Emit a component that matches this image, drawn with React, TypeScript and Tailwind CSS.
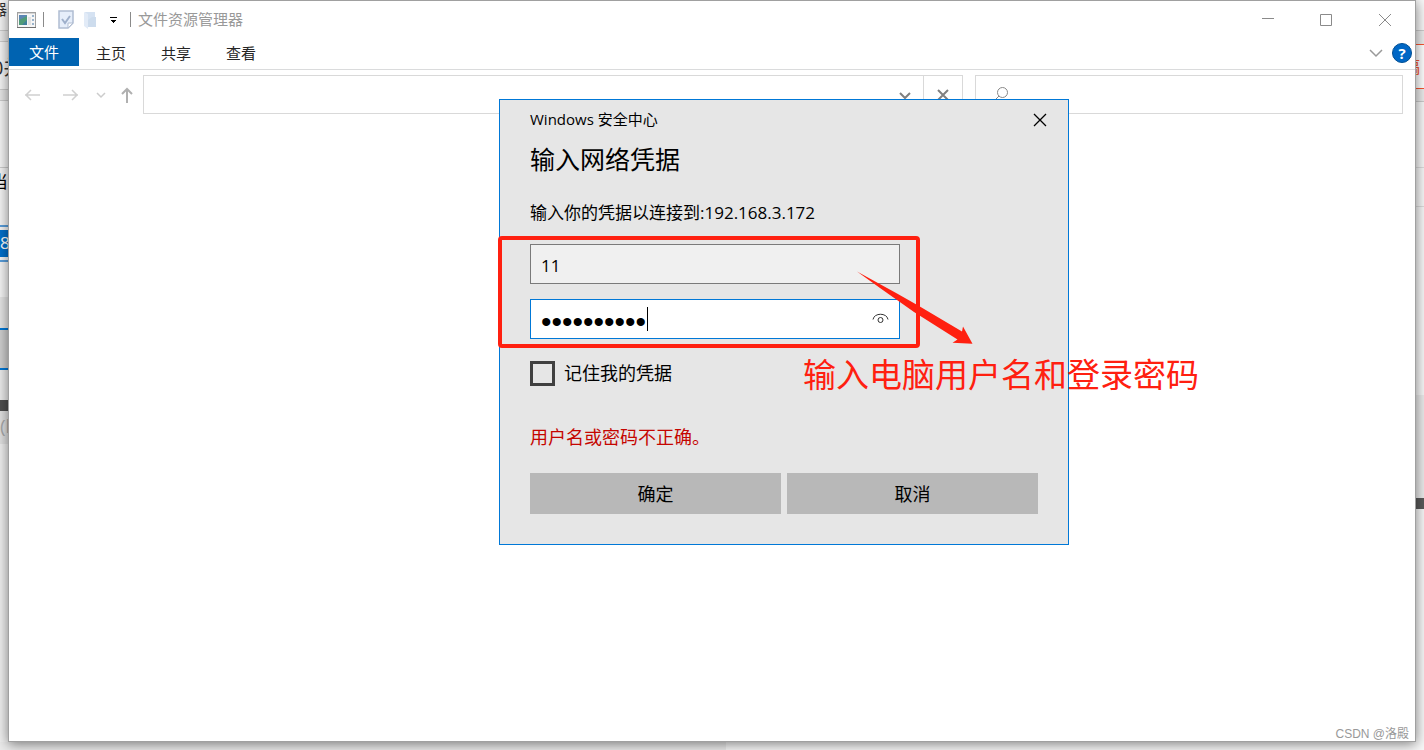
import { useState } from "react";

const tabs = ["主页", "共享", "查看"];

function AppIcon() {
  return (
    <svg width="19" height="16" viewBox="0 0 19 16" aria-hidden="true">
      <rect x="0.5" y="0.5" width="18" height="15" fill="#f6f6f6" stroke="#a0a0a0" />
      <path d="M0 15.500h19" stroke="#707070" />
      <path d="M1 1.500h17" stroke="#d4d4d4" />
      <rect x="2" y="3" width="8" height="10" fill="#5b86b4" />
      <path d="M2 13V8l4-2 4-2v9z" fill="#4f9a78" />
      <path d="M5 13l5-5v5z" fill="#3f7f9a" />
      <rect x="11" y="5" width="3" height="8" fill="#e2e2e2" />
      <path d="M16 3v2M16 7v2M16 11v2" stroke="#9ab4cc" strokeWidth="2" />
    </svg>
  );
}

function PropertiesIcon() {
  return (
    <svg width="16" height="19" viewBox="0 0 16 19" aria-hidden="true">
      <path d="M1 1h14v12l-5 5H1z" fill="#e6eefa" stroke="#b0bdd2" strokeWidth="1.500" />
      <path d="M15 13h-5v5z" fill="#fff" stroke="#b0bdd2" />
      <path d="M4 9l3 4 5-7" fill="none" stroke="#9fb0cb" strokeWidth="2" />
    </svg>
  );
}

function FolderIcon() {
  return (
    <svg width="14" height="18" viewBox="0 0 14 18" aria-hidden="true">
      <path d="M1 1h10v14H4z" fill="#d5e2f2" />
      <path d="M8 6h4v10H4V9z" fill="#cddced" />
      <path d="M0 1l4 2v15l-4-3z" fill="#e2ebf7" />
    </svg>
  );
}

function Arrow({ d, className }: { d: string; className: string }) {
  return (
    <svg width="16" height="16" viewBox="0 0 16 16" fill="none" stroke="currentColor" className={className} aria-hidden="true">
      <path d={d} />
    </svg>
  );
}

// Slices of the page behind the window, visible at its left edge
function LeftEdge() {
  return (
    <div className="flex w-2 shrink-0 flex-col overflow-hidden whitespace-nowrap bg-[#f6f6f6] text-[#333]">
      <div className="flex h-[30px] shrink-0 justify-end pr-px text-[15px] leading-[18px]">器</div>
      <div className="h-3 shrink-0 border-y border-[#ccc] bg-[#ececec]" />
      <div className="flex h-[47px] shrink-0 items-center pt-1 text-[20px]"><span className="-ml-2">0并</span></div>
      <div className="h-3 shrink-0 border-y border-[#ccc] bg-[#e8e8e8]" />
      <div className="h-[67px] shrink-0 border-b border-[#ccc]" />
      <div className="flex h-[57px] shrink-0 justify-end text-[17px] leading-[28px] text-black">当</div>
      <div className="h-[37px] shrink-0 border-y-2 border-[#5a9fdc] py-[3px]">
        <div className="h-[27px] bg-[#0070cc] text-[17px] leading-[25px] text-white">8</div>
      </div>
      <div className="h-[35px] shrink-0" />
      <div className="h-[31px] shrink-0 bg-[#e6e6e6]" />
      <div className="h-[42px] shrink-0 border-y-2 border-[#0078d7] bg-[#d0d0d0]" />
      <div className="h-[30px] shrink-0 bg-[#ececec]" />
      <div className="h-[11px] shrink-0 bg-[#4f4f4f]" />
      <div className="h-[33px] shrink-0 bg-[#e2e2e2] text-[19px] leading-[31px] text-[#aaa]">(h</div>
      <div className="flex-1 bg-[#f0f0f0]" />
    </div>
  );
}

function RightEdge() {
  return (
    <div className="flex w-2 shrink-0 flex-col overflow-hidden whitespace-nowrap bg-[#f8f8f8]">
      <div className="h-[30px] shrink-0" />
      <div className="h-[14px] shrink-0 border-t border-[#ccc] bg-[#ececec]" />
      <div className="flex h-[45px] shrink-0 items-center justify-end border-y border-[#fc5531] bg-white pr-1 text-[17px] text-[#fc5531]">稿</div>
      <div className="h-[13px] shrink-0 border-b border-[#ccc] bg-[#ececec]" />
      <div className="h-[66px] shrink-0 border-b border-[#ddd]" />
      <div className="h-[39px] shrink-0 border-b border-[#ddd]" />
      <div className="h-[188px] shrink-0" />
      <div className="h-[103px] shrink-0 bg-[#ebebeb]" />
      <div className="h-[11px] shrink-0 bg-[#5a5a5a]" />
      <div className="flex-1 bg-[#f8f8f8]" />
    </div>
  );
}

function TitleBar() {
  return (
    <header className="flex h-[37px] shrink-0 items-center pl-2">
      <AppIcon />
      <span className="ml-[7px] h-[15px] w-px bg-[#8a8a8a]" />
      <button type="button" aria-label="属性" className="ml-[14px]"><PropertiesIcon /></button>
      <button type="button" aria-label="新建文件夹" className="ml-[10px]"><FolderIcon /></button>
      <button type="button" aria-label="自定义快速访问工具栏" className="ml-3">
        <svg width="7" height="6" viewBox="0 0 7 6" aria-hidden="true">
          <rect width="7" height="1" />
          <path d="M1 3h5v1H5v1H4v1H3V5H2V4H1z" />
        </svg>
      </button>
      <span className="ml-[13px] h-[15px] w-px bg-[#8a8a8a]" />
      <h1 className="ml-[7px] text-[15px] text-[#999]">文件资源管理器</h1>
      <div className="ml-auto flex pr-px text-[#8a8a8a]">
        <button type="button" aria-label="最小化" className="flex w-[58px] justify-center">
          <Arrow d="M2 6.500h12" className="" />
        </button>
        <button type="button" aria-label="最大化" className="flex w-[58px] justify-center">
          <Arrow d="M2.500 2.500h11v11h-11z" className="" />
        </button>
        <button type="button" aria-label="关闭" className="flex w-[59px] justify-center">
          <Arrow d="M2 2l12 12M14 2L2 14" className="" />
        </button>
      </div>
    </header>
  );
}

function Ribbon() {
  return (
    <nav className="flex h-8 shrink-0 items-start border-b border-[#dadbdc] text-[15px]">
      <button type="button" className="h-7 w-[70px] bg-[#0063b1] text-white">文件</button>
      <div className="flex">
        {tabs.map((t) => (
          <button key={t} type="button" className="h-[30px] w-[65px] pr-px text-[#262626]">{t}</button>
        ))}
      </div>
      <div className="ml-auto flex h-[30px] items-center gap-2 pr-[3px]">
        <button type="button" aria-label="展开功能区">
          <Arrow d="M2 5l6 6 6-6" className="stroke-[1.500] text-[#999]" />
        </button>
        <button type="button" aria-label="帮助" className="flex size-5 items-center justify-center rounded-full border border-[#004f94] bg-[#0067c5] text-[15px] font-bold leading-none text-white">?</button>
      </div>
    </nav>
  );
}

function AddressRow() {
  return (
    <div className="flex h-11 shrink-0 items-stretch pr-3 pt-[5px]">
      <div className="flex w-[134px] shrink-0 items-center pl-[15px]">
        <button type="button" aria-label="后退"><Arrow d="M1 8h15M7 3L2 8l5 5" className="stroke-[1.500] text-[#d0d0d0]" /></button>
        <button type="button" aria-label="前进" className="ml-[23px]"><Arrow d="M0 8h15M9 3l5 5-5 5" className="stroke-[1.500] text-[#d0d0d0]" /></button>
        <button type="button" aria-label="最近位置" className="ml-[14px]"><Arrow d="M4 6l4 4 4-4" className="stroke-[1.500] text-[#ccc]" /></button>
        <button type="button" aria-label="上移" className="ml-[10px]">
          <Arrow d="M8 16V2M3 7l5-5 5 5" className="stroke-2 text-[#b0b0b0]" />
        </button>
      </div>
      <div className="flex min-w-0 flex-1 border border-[#d9d9d9]">
        <input aria-label="地址" className="min-w-0 flex-1 px-2 outline-none" />
        <button type="button" aria-label="历史记录" className="flex w-9 items-center justify-center">
          <Arrow d="M3 6l5 5 5-5" className="stroke-2 text-[#808080]" />
        </button>
        <button type="button" aria-label="停止" className="flex w-[39px] items-center justify-center border-l border-[#d9d9d9]">
          <Arrow d="M3 3l10 10M13 3L3 13" className="stroke-2 text-[#808080]" />
        </button>
      </div>
      <label className="ml-3 flex w-[428px] items-center border border-[#d9d9d9] pl-[18px]">
        <svg width="16" height="16" viewBox="0 0 16 16" fill="none" stroke="#888" aria-hidden="true">
          <circle cx="8.500" cy="5.500" r="5" />
          <path d="M5 9l-5 5" />
        </svg>
        <input type="search" aria-label="搜索" className="min-w-0 flex-1 px-2 outline-none" />
      </label>
    </div>
  );
}

function CredentialsDialog() {
  const [user, setUser] = useState("11");
  const [password, setPassword] = useState("1234567890");
  const [remember, setRemember] = useState(false);

  return (
    <form
      role="dialog"
      aria-labelledby="cred-title"
      onSubmit={(e) => e.preventDefault()}
      className="absolute left-[490px] top-[98px] w-[570px] border border-[#0078d7] bg-[#e6e6e6] px-[30px] pb-[30px] pt-[7px] text-[18px] text-black"
    >
      <div className="flex h-6 items-center justify-between">
        <p className="text-[15px]">Windows 安全中心</p>
        <button type="button" aria-label="关闭" className="-mr-[10px]">
          <Arrow d="M2 3l12 12M14 3L2 15" className="stroke-[1.300]" />
        </button>
      </div>
      <h2 id="cred-title" className="mt-[10px] text-[25px] leading-9">输入网络凭据</h2>
      <p className="mt-6 text-[17px] leading-6">输入你的凭据以连接到:192.168.3.172</p>

      <input
        aria-label="用户名"
        value={user}
        onChange={(e) => setUser(e.target.value)}
        className="mt-[19px] block h-10 w-[370px] border border-[#7a7a7a] bg-[#f0f0f0] px-[10px] pt-[2px] text-[17px] outline-none"
      />
      <div className="mt-[15px] flex h-10 w-[370px] items-center border border-[#0078d7] bg-white pl-[10px] pr-[10px]">
        <input
          type="password"
          aria-label="密码"
          value={password}
          onChange={(e) => setPassword(e.target.value)}
          className="h-9 w-[106px] pt-1 font-['Liberation_Sans',sans-serif] text-[30px] caret-transparent outline-none"
        />
        <span className="h-6 w-px bg-black" />
        <button type="button" aria-label="显示密码" className="ml-auto">
          <svg width="17" height="16" viewBox="0 0 17 16" fill="none" stroke="#333" aria-hidden="true">
            <path d="M1 8.500C2 1.500 15 1.500 16 8.500" />
            <circle cx="8.500" cy="9" r="2.500" />
          </svg>
        </button>
      </div>

      <label className="mt-[22px] flex h-[25px] items-center gap-[9px]">
        <input
          type="checkbox"
          checked={remember}
          onChange={(e) => setRemember(e.target.checked)}
          className="size-[25px] appearance-none border-[3px] border-[#404040] checked:bg-[#0078d7]"
        />
        记住我的凭据
      </label>
      <p role="alert" className="mt-[39px] leading-6 text-[#c50500]">用户名或密码不正确。</p>
      <div className="mt-6 grid grid-cols-2 gap-[6px]">
        <button type="submit" className="h-[41px] bg-[#b8b8b8] pt-[2px]">确定</button>
        <button type="button" className="h-[41px] bg-[#b8b8b8] pt-[2px]">取消</button>
      </div>
    </form>
  );
}

// Red markup drawn over the dialog
function Annotation() {
  return (
    <div className="pointer-events-none text-[#ff2010]">
      <div className="absolute left-[489px] top-[235px] h-[112px] w-[422px] rounded-[4px] border-4 border-[#ff2010]" />
      <svg width="118" height="74" viewBox="856 271 118 74" fill="currentColor" className="absolute left-[847px] top-[270px]" aria-hidden="true">
        <path d="M857 271.500L897 293.500 919 306 962 331.500 963 326.500 972.500 343.700 952.500 342.700 957.500 339.500 914 312 880 288z" />
      </svg>
      <p className="absolute left-[794px] top-[350px] whitespace-nowrap text-[33px] leading-[48px]">输入电脑用户名和登录密码</p>
    </div>
  );
}

export default function App() {
  return (
    <div className="flex min-h-screen flex-col overflow-hidden bg-[#f0f0f0] font-['Open_Sans','Noto_Sans_CJK_SC',sans-serif]">
      <div className="flex flex-1">
        <LeftEdge />
        <main className="relative z-10 flex min-w-0 flex-1 flex-col border border-[#a0a0a0] bg-white shadow-[0_2px_12px_rgba(0,0,0,0.5)]">
          <TitleBar />
          <Ribbon />
          <AddressRow />
          <CredentialsDialog />
          <Annotation />
          <p className="mt-auto self-end pr-[6px] font-['Liberation_Sans','Noto_Sans_CJK_SC',sans-serif] text-[12px] leading-[14px] text-[#999]">CSDN @洛殿</p>
        </main>
        <RightEdge />
      </div>
      <div className="flex h-2 shrink-0">
        <div className="w-[51%] bg-[#ebebeb]" />
        <div className="flex-1 bg-[#f8f8f8]" />
      </div>
    </div>
  );
}
